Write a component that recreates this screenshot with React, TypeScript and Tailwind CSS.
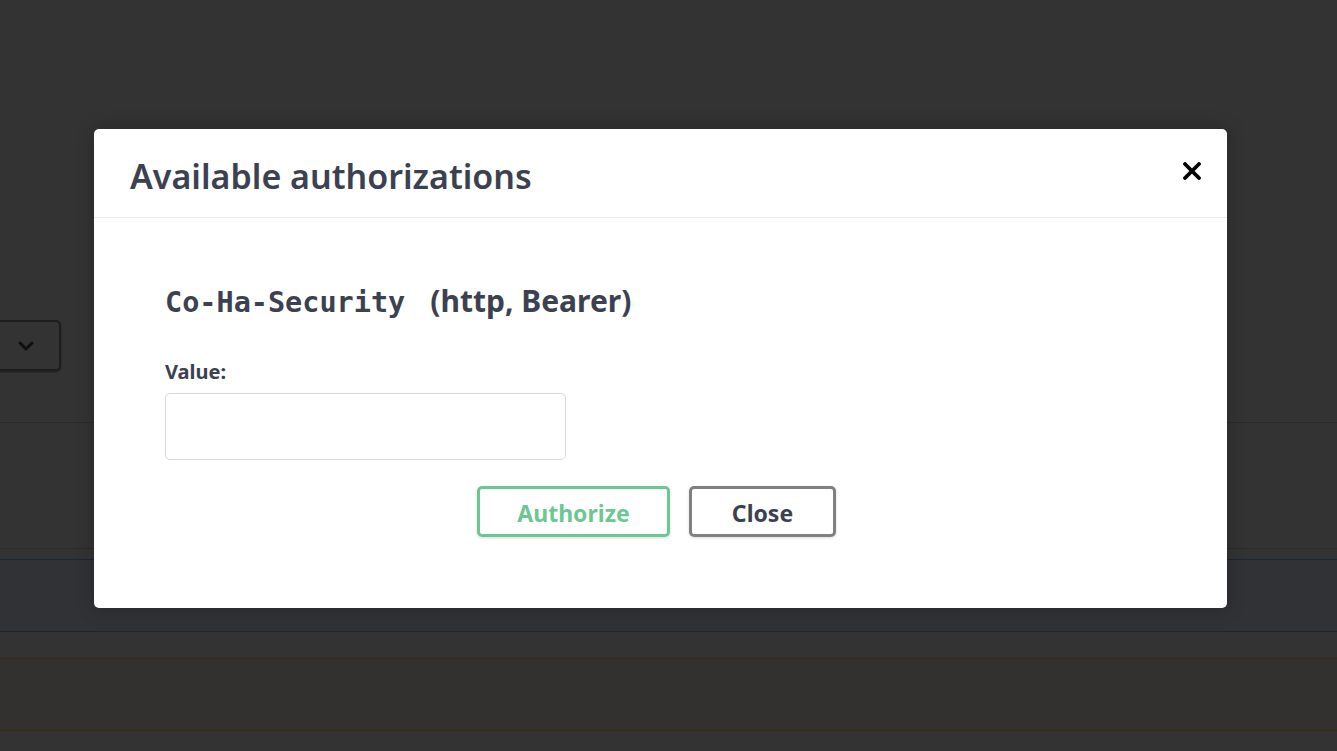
import { ChevronDown } from 'lucide-react'

const SANS = "font-['Noto_Sans',sans-serif]"

function Backdrop() {
  return (
    <div className="flex flex-col">
      <div className="h-[320px]" />
      {/* schema select, mostly off screen */}
      <div className="h-[103px] border-b border-[#2b2b2b]">
        <div className="-ml-[30px] flex h-[51px] w-[91px] items-center justify-end rounded-[5px] border-2 border-[#1d1d1d] pr-[21px] shadow-[0_1px_2px_rgba(0,0,0,0.4)]">
          <ChevronDown className="h-[24px] w-[24px] text-[#0f0f0f]" strokeWidth={3} />
        </div>
      </div>
      <div className="h-[126px] border-b border-[#2a2a2a]" />
      <div className="h-[10px]" />
      {/* GET row */}
      <div className="h-[73px] border-y border-[#1b2633] bg-[#303236]" />
      <div className="h-[26px]" />
      {/* PUT row */}
      <div className="h-[73px] border-y border-[#3a2812] bg-[#33312f]" />
      <div className="h-[21px]" />
    </div>
  )
}

function AuthModal() {
  return (
    <div className="absolute left-[94px] top-[129px] flex h-[479px] w-[1133px] flex-col rounded-[5px] bg-white shadow-[0_0_18px_rgba(0,0,0,0.25)]">
      <div className="flex h-[89px] items-center justify-between border-b border-[#ebebeb] pl-[36px] pr-[20px]">
        <h3 className={`${SANS} pt-[6px] text-[34px] font-semibold text-[#3b4151]`}>Available authorizations</h3>
        <button type="button" aria-label="Close" className="flex h-[30px] w-[30px] items-center justify-center pb-[4px]">
          <svg width="18" height="18" viewBox="0 0 18 18">
            <path d="M2 2 L16 16 M16 2 L2 16" stroke="#000" strokeWidth="3.8" strokeLinecap="round" />
          </svg>
        </button>
      </div>
      <div className="flex flex-col px-[71px] pt-[60px]">
        <h4 className="flex items-baseline gap-[25px] text-[#3b4151]">
          <code className="font-['DejaVu_Sans_Mono',monospace] text-[28.5px] font-bold">Co-Ha-Security</code>
          <span className={`${SANS} text-[30px] font-bold`}>(http, Bearer)</span>
        </h4>
        <label className={`${SANS} mt-[32px] text-[20px] font-bold text-[#3b4151]`}>Value:</label>
        <input
          type="text"
          className="mt-[6px] h-[67px] w-[401px] rounded-[5px] border border-[#d9d9d9] bg-white px-[12px] outline-none"
        />
        <div className="mt-[26px] flex justify-center gap-[19px] pr-[8px]">
          <button
            type="button"
            className={`${SANS} h-[51px] w-[193px] rounded-[5px] border-[3px] border-[#6cc790] pt-[3px] text-[23px] font-bold text-[#6cc790] shadow-[0_1px_3px_rgba(0,0,0,0.15)]`}
          >
            Authorize
          </button>
          <button
            type="button"
            className={`${SANS} h-[51px] w-[147px] rounded-[5px] border-[3px] border-[#808080] pt-[3px] text-[23px] font-bold text-[#3b4151] shadow-[0_1px_3px_rgba(0,0,0,0.15)]`}
          >
            Close
          </button>
        </div>
      </div>
    </div>
  )
}

export default function App() {
  return (
    <div className="relative h-[751px] w-full overflow-hidden bg-[#333333]">
      <Backdrop />
      <AuthModal />
    </div>
  )
}
